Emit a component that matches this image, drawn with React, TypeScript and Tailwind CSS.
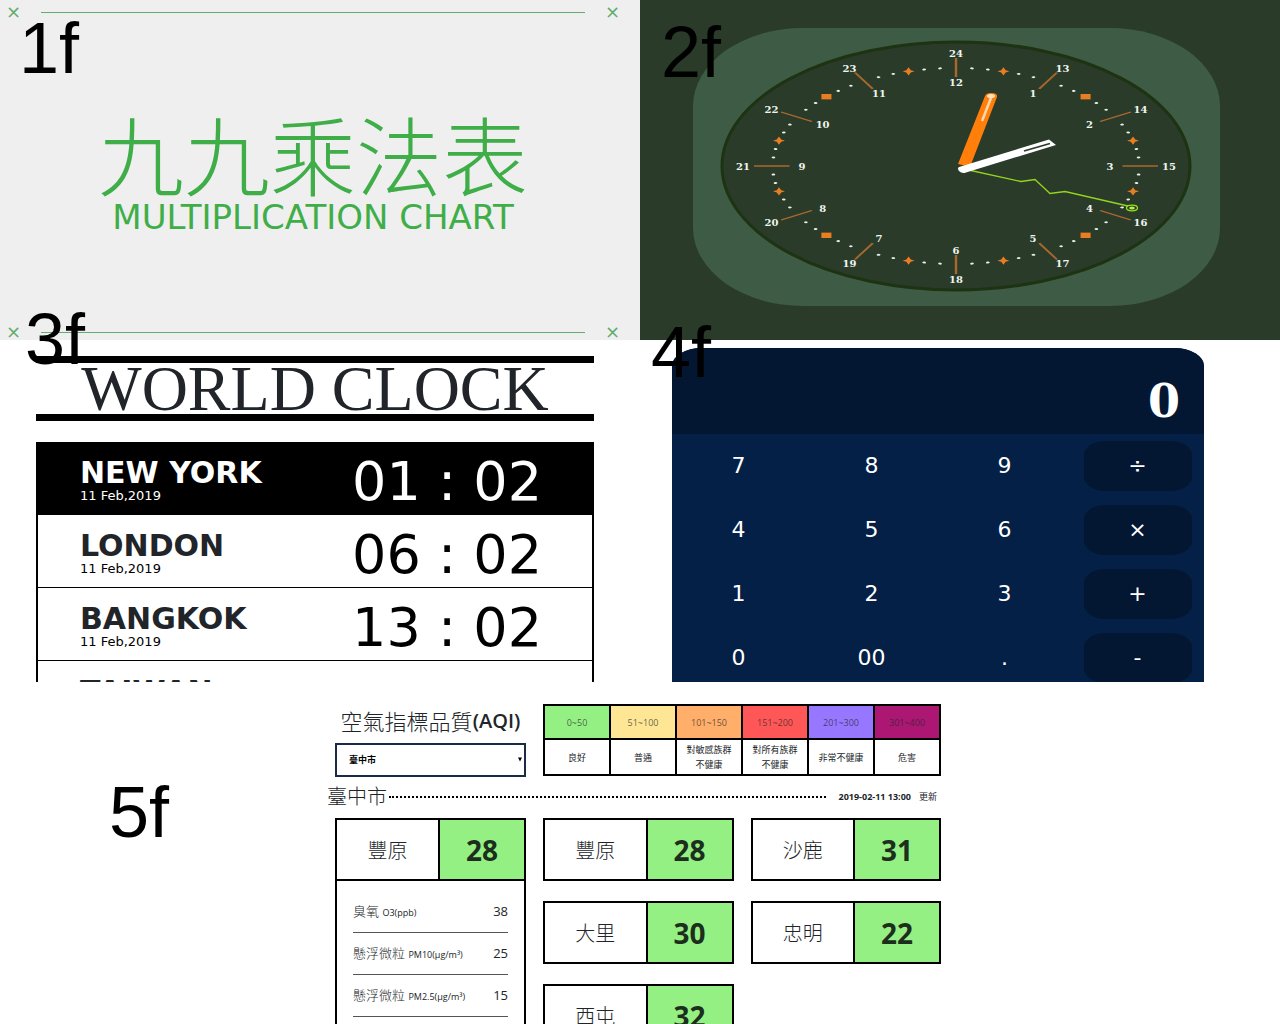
import React from "react";

const label =
  "pointer-events-none absolute z-10 font-['Liberation_Sans',sans-serif] text-[72px] leading-[72px] text-black";

const wide = "font-['DejaVu_Sans','Noto_Sans_CJK_TC',sans-serif]";

function Floor({ text, place }: { text: string; place: string }) {
  return <span className={`${label} ${place}`}>{text}</span>;
}

function Rule() {
  return (
    <div className={`flex h-4 items-center gap-5 text-lg leading-4 text-[#5fae6b] ${wide}`}>
      <span>×</span>
      <span className="h-px flex-1 bg-[#5fae6b]" />
      <span>×</span>
    </div>
  );
}

function MultiplicationPanel() {
  return (
    <section className="relative bg-[#efefef]">
      <Floor text="1f" place="left-[19px] top-3" />
      <div className="flex h-full flex-col justify-between pl-1.5 pr-5 pt-1">
        <Rule />
        <div className="flex flex-col items-center text-center text-[#3fae49]">
          <h1 className="font-['Noto_Sans_CJK_TC',sans-serif] text-[86px] font-light leading-[86px]">九九乘法表</h1>
          <p className={`mt-1 text-[34px] leading-[34px] ${wide}`}>MULTIPLICATION CHART</p>
        </div>
        <Rule />
      </div>
    </section>
  );
}

const CX = 956;
const CY = 166;
const STRETCH = 1.87;

function at(deg: number, rx: number, ry: number) {
  const a = (deg * Math.PI) / 180;
  return { x: CX + rx * Math.sin(a), y: CY - ry * Math.cos(a) };
}

function ClockFace() {
  const hours = Array.from({ length: 12 }, (_, i) => i + 1);
  const ticks = Array.from({ length: 72 }, (_, i) => i * 5).filter((d) => d % 30 !== 0);
  return (
    <svg viewBox="693 28 527 278" className="h-full w-full" role="img" aria-label="24 hour clock">
      <ellipse cx={CX} cy={CY} rx="234" ry="124" fill="#2a3b2a" stroke="#1d3312" strokeWidth="3" />
      <g transform={`translate(${CX} ${CY}) scale(${STRETCH} 1)`}>
        {hours.map((h) => (
          <line key={h} x1="0" x2="0" y1="-89" y2="-108" stroke="#a9682c" strokeWidth="1.3" transform={`rotate(${h * 30})`} />
        ))}
        {ticks.map((d) =>
          d % 15 === 0 ? (
            <path
              key={d}
              d={
                d % 45 === 0
                  ? "M0 -3.8 L1.9 -1.9 L3.8 0 L1.9 1.9 L0 3.8 L-1.9 1.9 L-3.8 0 L-1.9 -1.9Z"
                  : "M0 -4.2 L1.2 -1.2 L3.2 0 L1.2 1.2 L0 4.2 L-1.2 1.2 L-3.2 0 L-1.2 -1.2Z"
              }
              fill="#e87d22"
              transform={`rotate(${d}) translate(0 -98) rotate(${d % 45 === 0 ? 0 : -d})`}
            />
          ) : (
            <circle key={d} r="1" cx="0" cy="-98" fill="#e8efe8" transform={`rotate(${d})`} />
          )
        )}
      </g>
      <g
        fill="#eef5ee"
        textAnchor="middle"
        dominantBaseline="central"
        className="font-['DejaVu_Serif',serif] text-[10px] font-bold"
      >
        {hours.map((h) => {
          const inner = at(h * 30, 154, 84);
          const outer = at(h * 30, 213, 113);
          return (
            <React.Fragment key={h}>
              <text x={inner.x} y={inner.y}>{h}</text>
              <text x={outer.x} y={outer.y}>{h + 12}</text>
            </React.Fragment>
          );
        })}
      </g>
      <path d="M958 164 L985 96 Q986 93 991 93 Q998 93 997 97 L970 167Z" fill="#ff7f0a" />
      <path d="M991 98 L982 121" stroke="#ffd9ae" strokeWidth="2.5" />
      <ellipse cx="991" cy="96" rx="4" ry="2" fill="#ffe3c4" />
      <path
        d="M964 169 L1021 181.5 L1035 179.5 L1050 193.5 L1065 191.5 L1128 206"
        fill="none"
        stroke="#94d41c"
        strokeWidth="1.3"
      />
      <ellipse cx="1132" cy="208" rx="5.5" ry="2.8" fill="none" stroke="#94e41c" strokeWidth="1.3" />
      <ellipse cx="1132" cy="208" rx="2.8" ry="1.5" fill="#b6f23c" />
      <path d="M959 167 L1049 139.5 L1056 145 L966 172.5 Q962 174 959 171 Q957 168 959 167Z" fill="#ffffff" />
      <path d="M1024 151 L1050 143.5" stroke="#2a3b2a" strokeWidth="1.8" />
    </svg>
  );
}

function ClockPanel() {
  return (
    <section className="relative bg-[#2a3b2a] pl-[53px] pr-[60px] pt-7">
      <Floor text="2f" place="left-[21px] top-4" />
      <div className="h-[278px] rounded-[110px/78px] bg-[#3e5b45]">
        <ClockFace />
      </div>
    </section>
  );
}

const cities = [
  { name: "NEW YORK", time: "01 : 02", active: true },
  { name: "LONDON", time: "06 : 02", active: false },
  { name: "BANGKOK", time: "13 : 02", active: false },
  { name: "TAIWAN", time: "", active: false },
];

function WorldClockPanel() {
  return (
    <section className={`relative bg-white ${wide}`}>
      <Floor text="3f" place="left-[25px] -top-[37px]" />
      <div className="h-full overflow-hidden pl-9 pr-[46px] pt-4">
        <h2 className="border-y-[7px] border-black text-center font-['Liberation_Serif',serif] text-[64px] leading-[51px] text-[#212529]">
          WORLD CLOCK
        </h2>
        <ul className="mt-[21px] border-x-2 border-black">
          {cities.map((c) => (
            <li
              key={c.name}
              className={
                c.active
                  ? "flex h-[73px] items-start bg-black pl-[42px] pr-[50px] pt-3 text-white"
                  : "flex h-[73px] items-start border-b border-black pl-[42px] pr-[50px] pt-3 text-black"
              }
            >
              <div className="flex-1 pt-1">
                <h3 className={c.active ? "text-[30px] font-bold leading-[30px]" : "text-[30px] font-bold leading-[30px] text-[#212529]"}>{c.name}</h3>
                <p className="text-[13px] leading-4">11 Feb,2019</p>
              </div>
              {c.time && <time className="text-[54px] leading-[56px]">{c.time}</time>}
            </li>
          ))}
        </ul>
      </div>
    </section>
  );
}

const keys = ["7", "8", "9", "÷", "4", "5", "6", "×", "1", "2", "3", "+", "0", "00", ".", "-"];

function CalculatorPanel() {
  return (
    <section className={`relative bg-white ${wide}`}>
      <Floor text="4f" place="left-[11px] -top-6" />
      <div className="h-full overflow-hidden pl-8 pr-[76px] pt-2">
        <div className="overflow-hidden rounded-t-[30px_18px] bg-[#052046] text-white">
          <output className="flex h-[86px] items-end justify-end bg-[#031733] px-6 pb-2 font-['DejaVu_Serif',serif] text-[46px] font-bold leading-[50px]">
            0
          </output>
          <div className="grid grid-cols-4">
            {keys.map((k, i) => (
              <div key={k} className="flex h-16 items-center justify-center text-[22px] leading-6">
                <button
                  type="button"
                  className={i % 4 === 3 ? "h-[50px] w-[108px] rounded-[22px/14px] bg-[#031733]" : "h-[50px] w-[108px]"}
                >
                  {k}
                </button>
              </div>
            ))}
          </div>
        </div>
      </div>
    </section>
  );
}

const levels = [
  { range: "0~50", text: "良好", bg: "bg-[#95f084]" },
  { range: "51~100", text: "普通", bg: "bg-[#ffe695]" },
  { range: "101~150", text: "對敏感族群不健康", bg: "bg-[#ffaf6a]" },
  { range: "151~200", text: "對所有族群不健康", bg: "bg-[#ff5757]" },
  { range: "201~300", text: "非常不健康", bg: "bg-[#9777ff]" },
  { range: "301~400", text: "危害", bg: "bg-[#ad1774]" },
];

const stations = [
  { name: "豐原", value: 28 },
  { name: "沙鹿", value: 31 },
  { name: "大里", value: 30 },
  { name: "忠明", value: 22 },
  { name: "西屯", value: 32 },
];

const readings = [
  { name: "臭氧", unit: "O3(ppb)", value: 38 },
  { name: "懸浮微粒", unit: "PM10(μg/m³)", value: 25 },
  { name: "懸浮微粒", unit: "PM2.5(μg/m³)", value: 15 },
];

function Station({ name, value }: { name: string; value: number }) {
  return (
    <div className="flex h-[63px] border-2 border-black">
      <span className="flex flex-[102] items-center justify-center pt-0.5 text-xl font-light">{name}</span>
      <span className="flex flex-[85] items-center justify-center border-l-2 border-black bg-[#95f084] text-[28px] font-bold text-[#1c2e1c]">
        {value}
      </span>
    </div>
  );
}

function AirQualityPanel() {
  return (
    <section className="relative col-span-2 min-h-0 bg-white">
      <Floor text="5f" place="left-[109px] top-[94px]" />
      <div className="h-full overflow-hidden pr-1">
        <div className="mx-auto grid w-full max-w-[606px] grid-cols-[191px_1fr_1fr] gap-x-[17px] pt-[22px] font-['Open_Sans','Noto_Sans_CJK_TC',sans-serif] text-[#212529]">
          <div>
            <h2 className="flex h-[34px] items-center justify-center whitespace-nowrap text-[22px] font-light leading-8">
              <span>空氣指標品質</span>
              <span className="text-xl font-semibold">(AQI)</span>
            </h2>
            <div className="relative mt-[5px]">
              <select
                aria-label="縣市"
                className="h-[34px] w-full appearance-none border-2 border-[#1b2a45] bg-white px-3 text-[9px] font-bold text-black"
              >
                <option>臺中市</option>
              </select>
              <svg
                viewBox="0 0 4 5"
                className="pointer-events-none absolute right-1 top-3.5 h-[5px] w-1"
                aria-hidden="true"
              >
                <path d="M0 0.5 H4 L2 4.5Z" fill="#000000" />
              </svg>
            </div>
          </div>
          <table className="col-span-2 h-[72px] w-full table-fixed border-collapse text-center text-[9px] leading-[15px]">
            <thead>
              <tr>
                {levels.map((l) => (
                  <th key={l.range} scope="col" className={`h-[34px] border-2 border-black p-0 font-normal text-[#212529]/70 ${l.bg}`}>
                    {l.range}
                  </th>
                ))}
              </tr>
            </thead>
            <tbody>
              <tr>
                {levels.map((l) => (
                  <td key={l.range} className="h-9 border-2 border-black px-[9px] py-0">
                    {l.text}
                  </td>
                ))}
              </tr>
            </tbody>
          </table>
          <div className="col-span-3 -ml-2 mb-1 mt-[3px] flex h-[34px] items-center">
            <h3 className="mr-0.5 text-xl font-light leading-8">臺中市</h3>
            <span className="flex-1 border-t-2 border-dotted border-black" />
            <span className="ml-[13px] mr-1 flex gap-2 text-[9px] font-bold leading-4">
              <time>2019-02-11 13:00</time>
              <span className="font-normal">更新</span>
            </span>
          </div>
          <div>
            <Station name="豐原" value={28} />
            <div className="border-x-2 border-black px-4 pb-4 pt-2.5">
              {readings.map((r) => (
                <div key={r.unit} className="flex h-[42px] items-center justify-between border-b border-[#555555] text-[13px]">
                  <span className="font-light">
                    {r.name} <span className="text-[9px] font-normal">{r.unit}</span>
                  </span>
                  <span>{r.value}</span>
                </div>
              ))}
            </div>
          </div>
          <div className="col-span-2 grid grid-cols-2 content-start gap-x-[17px] gap-y-5">
            {stations.map((s) => (
              <Station key={s.name} name={s.name} value={s.value} />
            ))}
          </div>
        </div>
      </div>
    </section>
  );
}

export default function App() {
  return (
    <main className="grid h-screen grid-cols-2 grid-rows-[340px_342px_minmax(0,1fr)] overflow-hidden bg-white">
      <MultiplicationPanel />
      <ClockPanel />
      <WorldClockPanel />
      <CalculatorPanel />
      <AirQualityPanel />
    </main>
  );
}
